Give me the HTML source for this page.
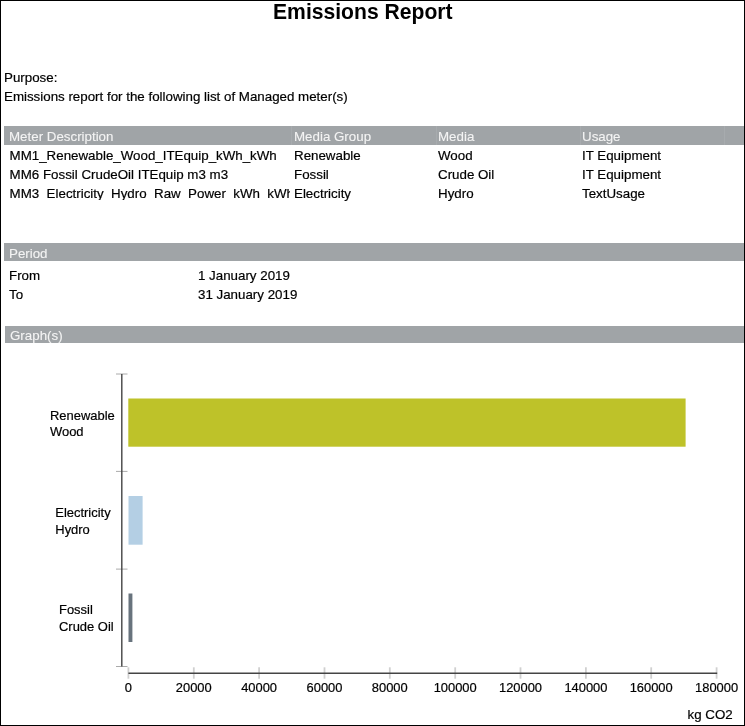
<!DOCTYPE html>
<html><head><meta charset="utf-8">
<style>
html,body{margin:0;padding:0;background:#fff;-webkit-font-smoothing:antialiased;}
body{width:745px;height:726px;position:relative;overflow:hidden;font-family:"Liberation Sans",sans-serif;color:#000;}
.frame{position:absolute;left:0;top:0;width:743px;height:724px;border:1px solid #000;}
.t{position:absolute;white-space:pre;font-size:13.33px;line-height:15px;-webkit-text-stroke:0.2px #000;}
.title{position:absolute;left:0;width:727px;text-align:center;top:0;font-weight:bold;font-size:21px;line-height:24px;color:#000;}
.bar{position:absolute;left:4px;right:1px;background:#a0a4a7;}
.h{position:absolute;white-space:pre;font-size:13.33px;line-height:15px;color:#f4f4f4;-webkit-text-stroke:0.1px #f4f4f4;}
.clip{position:absolute;overflow:hidden;}
</style></head><body>
<div id="w" style="position:absolute;left:0;top:0;width:745px;height:726px;will-change:transform">
<div class="frame"></div>
<div class="title" style="left:272.6px;width:auto;text-align:left;top:0px;transform:scale(1.006,1.07);transform-origin:0 19px">Emissions Report</div>

<div class="t" style="left:4px;top:70px">Purpose:</div>
<div class="t" style="left:4px;top:89px">Emissions report for the following list of Managed meter(s)</div>

<div class="bar" style="top:126px;height:19px"></div>
<div style="position:absolute;left:291px;top:126px;width:1px;height:19px;background:#a7abae"></div>
<div style="position:absolute;left:436px;top:126px;width:1px;height:19px;background:#a7abae"></div>
<div style="position:absolute;left:580px;top:126px;width:1px;height:19px;background:#a7abae"></div>
<div style="position:absolute;left:724px;top:126px;width:1px;height:19px;background:#a7abae"></div>
<div class="h" style="left:9px;top:129px">Meter Description</div>
<div class="h" style="left:294px;top:129px">Media Group</div>
<div class="h" style="left:438px;top:129px">Media</div>
<div class="h" style="left:582px;top:129px">Usage</div>

<div class="clip" style="left:4px;top:145px;width:286px;height:55.4px">
<div class="t" style="left:5.6px;top:3px">MM1_Renewable_Wood_ITEquip_kWh_kWh</div>
<div class="t" style="left:5.6px;top:22px">MM6 Fossil CrudeOil ITEquip m3 m3</div>
<div class="t" style="left:5.6px;top:41px">MM3_Electricity_Hydro_Raw_Power_kWh_kWh</div>
</div>
<div class="clip" style="left:291px;top:145px;width:450px;height:56px">
<div class="t" style="left:3px;top:3px">Renewable</div>
<div class="t" style="left:3px;top:22px">Fossil</div>
<div class="t" style="left:3px;top:41px">Electricity</div>
<div class="t" style="left:147px;top:3px">Wood</div>
<div class="t" style="left:147px;top:22px">Crude Oil</div>
<div class="t" style="left:147px;top:41px">Hydro</div>
<div class="t" style="left:291px;top:3px">IT Equipment</div>
<div class="t" style="left:291px;top:22px">IT Equipment</div>
<div class="t" style="left:291px;top:41px">TextUsage</div>
</div>

<div class="bar" style="top:243px;height:18px"></div>
<div class="h" style="left:9px;top:246px">Period</div>
<div class="t" style="left:9px;top:268px">From</div>
<div class="t" style="left:198px;top:268px">1 January 2019</div>
<div class="t" style="left:9px;top:287px">To</div>
<div class="t" style="left:198px;top:287px">31 January 2019</div>

<div class="bar" style="top:326px;height:17px;left:5px"></div>
<div class="h" style="left:10px;top:328px">Graph(s)</div>

<svg style="position:absolute;left:0;top:0" width="745" height="726">
<rect x="128.3" y="398.5" width="557.3" height="48.2" fill="#bec229"/>
<rect x="128.5" y="496" width="14.1" height="48.7" fill="#b4cfe4"/>
<rect x="128.5" y="593.5" width="3.9" height="48.5" fill="#68737d"/>
<g stroke="#aaa" stroke-width="1">
<line x1="116" y1="374" x2="127.5" y2="374"/>
<line x1="116" y1="471.4" x2="127.5" y2="471.4"/>
<line x1="116" y1="569.1" x2="127.5" y2="569.1"/>
<line x1="116" y1="666.5" x2="127.5" y2="666.5"/>
</g>
<g stroke="#d0d0d0" stroke-width="1.8"><line x1="128.4" y1="667.3" x2="128.4" y2="678.7"/><line x1="193.8" y1="667.3" x2="193.8" y2="678.7"/><line x1="259.1" y1="667.3" x2="259.1" y2="678.7"/><line x1="324.5" y1="667.3" x2="324.5" y2="678.7"/><line x1="389.8" y1="667.3" x2="389.8" y2="678.7"/><line x1="455.2" y1="667.3" x2="455.2" y2="678.7"/><line x1="520.5" y1="667.3" x2="520.5" y2="678.7"/><line x1="585.9" y1="667.3" x2="585.9" y2="678.7"/><line x1="651.2" y1="667.3" x2="651.2" y2="678.7"/><line x1="716.6" y1="667.3" x2="716.6" y2="678.7"/></g>
<line x1="121.8" y1="374" x2="121.8" y2="666.5" stroke="#444" stroke-width="1.4"/>
<line x1="128.4" y1="673.3" x2="717.2" y2="673.3" stroke="#444" stroke-width="1.4"/>
<g font-family="Liberation Sans" font-size="12.9" fill="#000" stroke="#000" stroke-width="0.2" text-anchor="middle">
<text x="128.4" y="692">0</text>
<text x="193.8" y="692">20000</text>
<text x="259.1" y="692">40000</text>
<text x="324.5" y="692">60000</text>
<text x="389.8" y="692">80000</text>
<text x="455.2" y="692">100000</text>
<text x="520.5" y="692">120000</text>
<text x="585.9" y="692">140000</text>
<text x="651.2" y="692">160000</text>
<text x="716.6" y="692">180000</text>
</g>
<g font-family="Liberation Sans" font-size="12.95" fill="#000" stroke="#000" stroke-width="0.2">
<text x="50" y="419.8">Renewable</text>
<text x="50" y="435.9">Wood</text>
<text x="55.3" y="517.3">Electricity</text>
<text x="55.3" y="533.6">Hydro</text>
<text x="59" y="614.4">Fossil</text>
<text x="59" y="630.6">Crude Oil</text>
<text x="687.5" y="718.8" font-size="13.33">kg CO2</text>
</g>
</svg>
</div>
</body></html>
